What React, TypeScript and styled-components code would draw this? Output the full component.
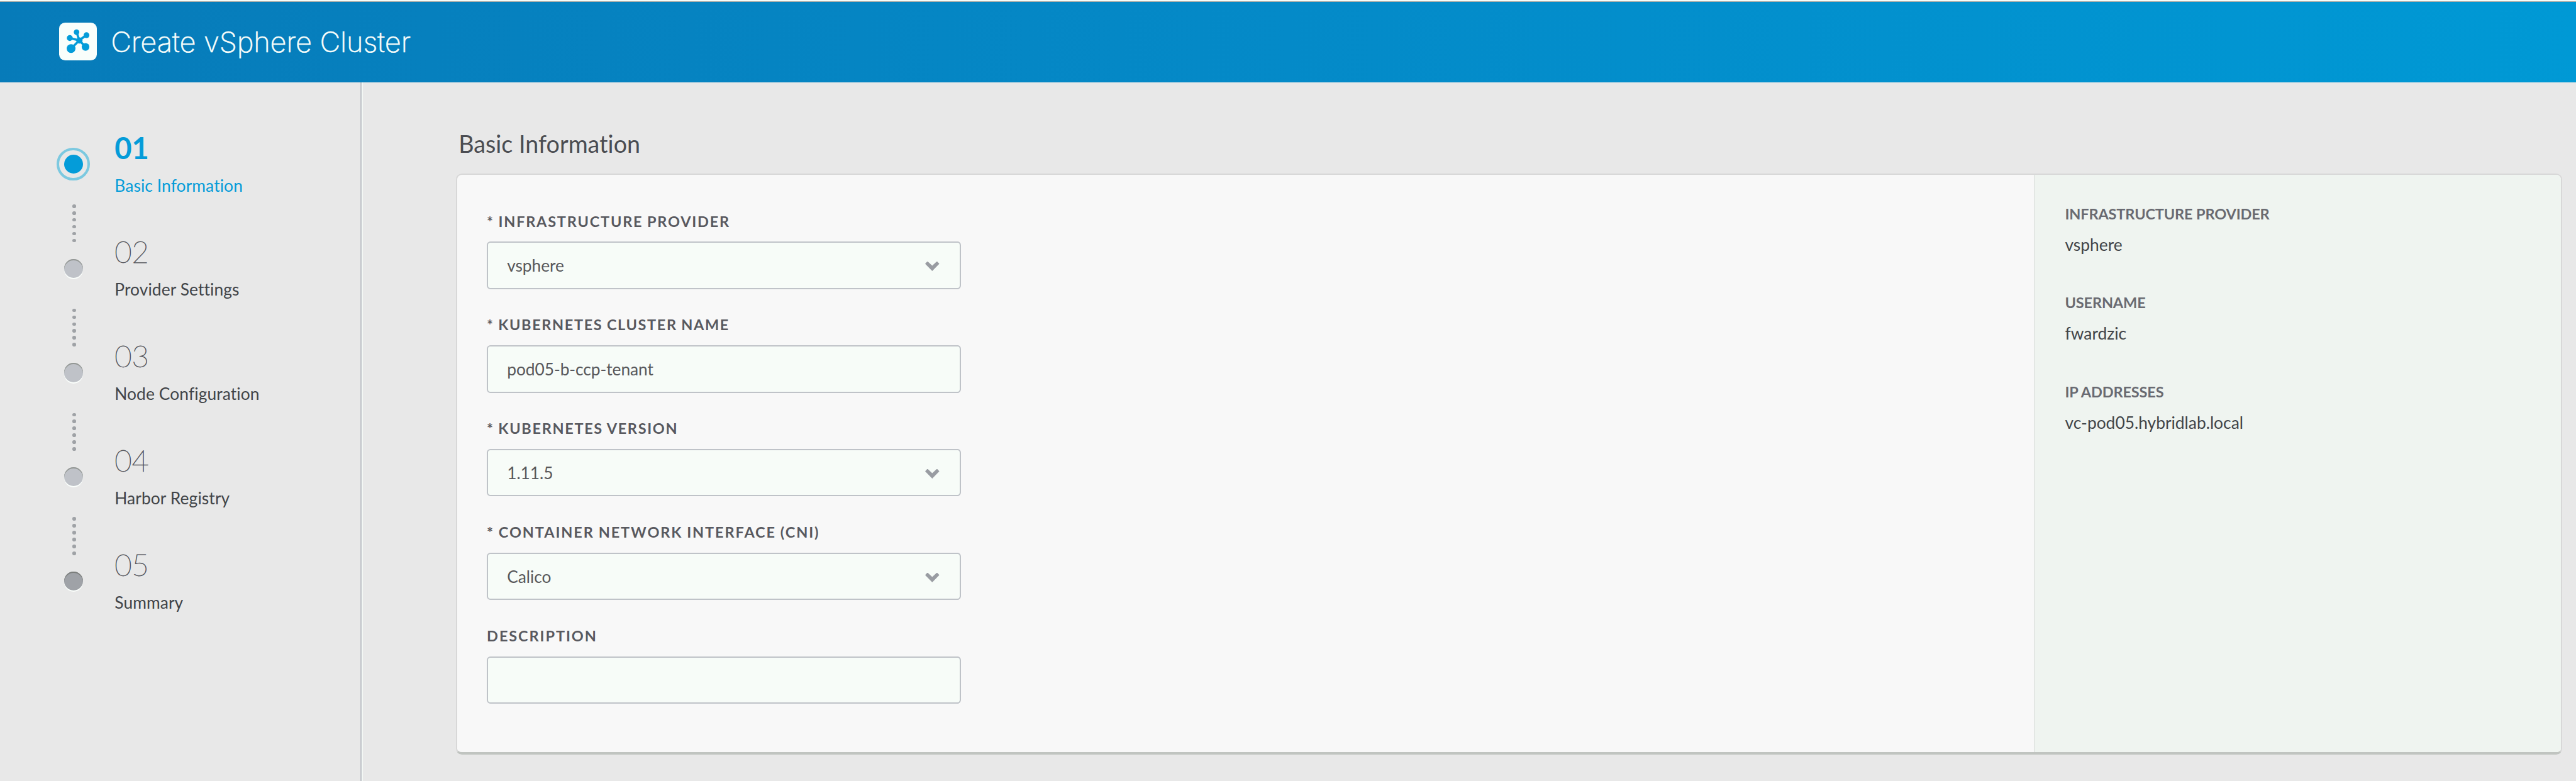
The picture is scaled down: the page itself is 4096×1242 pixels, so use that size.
import React from 'react';
import styled, { createGlobalStyle } from 'styled-components';

/* Every length is given in design units and scaled once here. */
const SCALE = 4096 / 4348;
const u = (n: number) => `${+(n * SCALE).toFixed(3)}px`;

const color = {
  page: '#e8e8e8',
  accent: '#049cd9',
  ring: '#7cc9e0',
  text: '#414448',
  label: '#58595f',
  muted: '#696a71',
  line: '#bfc3c8',
  card: '#f8f8f8',
  field: '#f7fcf8',
  aside: '#eff4f0',
};

const GlobalStyle = createGlobalStyle`
  * { box-sizing: border-box; }
  html, body { margin: 0; height: 100%; }
  body {
    background: ${color.page};
    color: ${color.text};
    font-family: Lato, "Open Sans", sans-serif;
    overflow: hidden;
  }
`;

const Page = styled.div`
  display: flex;
  flex-direction: column;
  height: 1242px;
  background: ${color.page};
`;

const Header = styled.header`
  display: flex;
  align-items: flex-start;
  flex: none;
  gap: ${u(23)};
  height: ${u(139)};
  padding: ${u(35)} 0 0 ${u(100)};
  border-top: 3px solid #a7aeac;
  border-image: linear-gradient(#f7fcf8 0 2px, #a5a8a6 2px 3px) 3 0 0 0;
  background: linear-gradient(90deg, #077bb9 0%, #048ac8 50%, #0099d5 100%) padding-box;
`;

const LogoTile = styled.div`
  flex: none;
  width: ${u(64)};
  height: ${u(64)};
  border-radius: ${u(10)};
  background: #f9fefb;
  svg { display: block; width: 100%; height: 100%; }
`;

const Title = styled.h1`
  margin: ${u(1.2)} 0 0;
  color: #f9fefb;
  font: 200 ${u(48)} / ${u(64)} Inter, "Liberation Sans", sans-serif;
  letter-spacing: ${u(-0.16)};
  -webkit-text-stroke: 0.5px #f9fefb;
  white-space: nowrap;
`;

const Body = styled.div`
  display: flex;
  flex: 1;
  min-height: 0;
`;

const Sidebar = styled.nav`
  flex: none;
  width: ${u(610)};
  padding: ${u(84.7)} 0 0 ${u(96)};
  border-right: 2px solid ${color.line};
`;

const Step = styled.div`
  display: flex;
  gap: ${u(41.5)};
  height: ${u(176)};
`;

const Marker = styled.div`
  display: flex;
  flex-direction: column;
  align-items: center;
  width: ${u(56)};
  padding-top: ${u(25.3)};
`;

const Ring = styled.div<{ $active: boolean }>`
  display: flex;
  align-items: center;
  justify-content: center;
  flex: none;
  width: ${u(56)};
  height: ${u(56)};
  border: 4px solid ${p => (p.$active ? color.ring : 'transparent')};
  border-radius: 50%;
`;

const Bullet = styled.div<{ $kind: 'active' | 'idle' | 'last' }>`
  width: ${u(32)};
  height: ${u(32)};
  border-radius: 50%;
  background: ${p => ({ active: color.accent, idle: '#bfc2c8', last: '#9fa2a7' })[p.$kind]};
  box-shadow: ${p => ({
    active: 'none',
    idle: 'inset 0 2px 0 #929693, 0 2px 0 #fbfffc',
    last: 'inset 0 2px 0 #7b7e7c, 0 2px 0 #fbfffc',
  })[p.$kind]};
`;

const Dots = styled.div`
  display: flex;
  flex-direction: column;
  gap: ${u(5.6)};
  margin: ${u(40)} 0 0 ${u(2)};
`;

const Dot = styled.i`
  width: ${u(6)};
  height: ${u(6)};
  border-radius: 50%;
  background: #9fa2a6;
`;

const StepText = styled.div`
  padding-top: ${u(1)};
  color: ${color.text};
  white-space: nowrap;
`;

const StepNumber = styled.div<{ $active: boolean }>`
  margin-bottom: ${u(21)};
  color: ${p => (p.$active ? color.accent : color.label)};
  font-size: ${u(50)};
  font-weight: ${p => (p.$active ? 700 : 200)};
  line-height: ${u(50)};
  -webkit-text-stroke: ${p => (p.$active ? 0 : '0.8px')};
`;

const StepLabel = styled.div<{ $active: boolean }>`
  color: ${p => (p.$active ? color.accent : color.text)};
  font-size: ${u(28)};
  line-height: ${u(34)};
  letter-spacing: ${u(0.1)};
`;

const Main = styled.main`
  flex: 1;
  min-width: 0;
  padding: ${u(79.5)} ${u(23)} 0 ${u(158)};
  border-left: 2px solid #f3f7f4;
`;

const Heading = styled.h2`
  margin: 0 0 ${u(26.5)} ${u(4)};
  color: #4a4c51;
  font-size: ${u(40)};
  font-weight: 400;
  line-height: ${u(48)};
  font-variant-ligatures: none;
`;

const Card = styled.section`
  display: flex;
  height: ${u(981)};
  border: 2px solid #d8d8d8;
  border-bottom: 4px solid #c0c4c0;
  border-radius: ${u(10)};
  background: ${color.card};
  overflow: hidden;
`;

const Form = styled.form`
  display: flex;
  flex: 1;
  flex-direction: column;
  gap: ${u(45.3)};
  padding: ${u(63.3)} 0 0 ${u(49.5)};
`;

const Field = styled.div`
  width: ${u(800)};
`;

const FieldLabel = styled.div<{ $track: number }>`
  margin-bottom: ${u(19.7)};
  color: ${color.label};
  font-size: ${u(25)};
  font-weight: 700;
  line-height: ${u(30)};
  letter-spacing: ${p => u(p.$track)};
  word-spacing: ${u(-0.8)};
  white-space: nowrap;
`;

const Control = styled.div`
  display: flex;
  align-items: center;
  justify-content: space-between;
  height: ${u(80)};
  padding: 0 ${u(34)} 0 ${u(32)};
  border: 2px solid ${color.line};
  border-radius: ${u(6)};
  background: ${color.field};
  color: #58585b;
  font-size: ${u(28)};
  letter-spacing: ${u(-0.08)};
`;

const Chevron = styled.svg`
  width: ${u(24)};
  height: ${u(16)};
  margin-top: ${u(4)};
  fill: #999ca2;
`;

const Aside = styled.aside`
  display: flex;
  flex: none;
  flex-direction: column;
  gap: ${u(66.1)};
  width: ${u(890)};
  padding: ${u(50.9)} 0 0 ${u(50.5)};
  border-left: 2px solid #e3e7e4;
  background: ${color.aside};
`;

const Fact = styled.div`
  white-space: nowrap;
`;

const FactLabel = styled.div`
  margin-bottom: ${u(19.9)};
  color: ${color.muted};
  font-size: ${u(25)};
  font-weight: 700;
  line-height: ${u(30)};
  letter-spacing: ${u(-0.18)};
`;

const FactValue = styled.div`
  font-size: ${u(28)};
  line-height: ${u(34)};
`;

const steps = ['Basic Information', 'Provider Settings', 'Node Configuration', 'Harbor Registry', 'Summary'];

const fields = [
  { label: '* INFRASTRUCTURE PROVIDER', track: 1.85, value: 'vsphere', select: true },
  { label: '* KUBERNETES CLUSTER NAME', track: 1.7, value: 'pod05-b-ccp-tenant', select: false },
  { label: '* KUBERNETES VERSION', track: 1.75, value: '1.11.5', select: true },
  { label: '* CONTAINER NETWORK INTERFACE (CNI)', track: 2, value: 'Calico', select: true },
  { label: 'DESCRIPTION', track: 2, value: '', select: false },
];

const facts = [
  { label: 'INFRASTRUCTURE PROVIDER', value: 'vsphere' },
  { label: 'USERNAME', value: 'fwardzic' },
  { label: 'IP ADDRESSES', value: 'vc-pod05.hybridlab.local' },
];

const ClusterLogo = () => (
  <svg viewBox="0 0 64 64" fill={color.accent} stroke={color.accent} strokeLinecap="round">
    <g strokeWidth="3.8">
      <path d="M34 30 29.5 16" />
      <path d="M34 30 46 21" />
      <path d="M34 30 18 26" />
      <path d="M34 30 20 44" />
      <path d="M34 30 44.7 41" />
    </g>
    <g stroke="none">
      <circle cx="34.3" cy="30.2" r="5.2" />
      <circle cx="29.4" cy="16" r="4.7" />
      <circle cx="46.2" cy="21.2" r="4.9" />
      <circle cx="18" cy="26" r="5" />
      <circle cx="20.2" cy="43.8" r="7.4" />
      <circle cx="44.6" cy="41" r="6.5" />
    </g>
  </svg>
);

export default function App() {
  return (
    <Page>
      <GlobalStyle />
      <Header>
        <LogoTile><ClusterLogo /></LogoTile>
        <Title>Create vSphere Cluster</Title>
      </Header>
      <Body>
        <Sidebar>
          {steps.map((name, i) => {
            const active = i === 0;
            const last = i === steps.length - 1;
            return (
              <Step key={name}>
                <Marker>
                  <Ring $active={active}>
                    <Bullet $kind={active ? 'active' : last ? 'last' : 'idle'} />
                  </Ring>
                  {!last && <Dots>{Array.from({ length: 6 }, (_, d) => <Dot key={d} />)}</Dots>}
                </Marker>
                <StepText>
                  <StepNumber $active={active}>{`0${i + 1}`}</StepNumber>
                  <StepLabel $active={active}>{name}</StepLabel>
                </StepText>
              </Step>
            );
          })}
        </Sidebar>
        <Main>
          <Heading>Basic Information</Heading>
          <Card>
            <Form>
              {fields.map(f => (
                <Field key={f.label}>
                  <FieldLabel $track={f.track}>{f.label}</FieldLabel>
                  <Control>
                    <span>{f.value}</span>
                    {f.select && (
                      <Chevron viewBox="0 0 24 16">
                        <path d="M0 3.8 3.4 0h1.2L12 7l7.4-7h1.2L24 3.8 12 16z" />
                      </Chevron>
                    )}
                  </Control>
                </Field>
              ))}
            </Form>
            <Aside>
              {facts.map(f => (
                <Fact key={f.label}>
                  <FactLabel>{f.label}</FactLabel>
                  <FactValue>{f.value}</FactValue>
                </Fact>
              ))}
            </Aside>
          </Card>
        </Main>
      </Body>
    </Page>
  );
}
